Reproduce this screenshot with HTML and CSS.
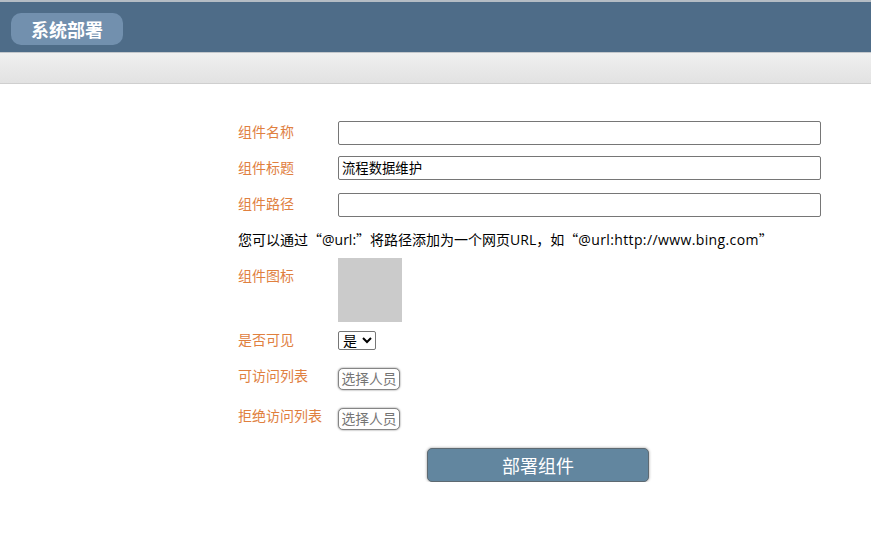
FILE: index.html
```html
<!DOCTYPE html>
<html lang="zh-CN">
<head>
<meta charset="utf-8">
<title>系统部署</title>
<link rel="stylesheet" href="styles.css">
</head>
<body>
<header class="topbar"><h1 class="title">系统部署</h1></header>
<div class="subbar"></div>
<form class="form">
  <div class="row row-name"><label class="label">组件名称</label><input class="text" type="text"></div>
  <div class="row row-title"><label class="label">组件标题</label><input class="text" type="text" value="流程数据维护"></div>
  <div class="row row-path"><label class="label">组件路径</label><input class="text" type="text"></div>
  <p class="hint">您可以通过<span class="open-quote">“</span>@url:<span class="close-quote">”</span>将路径添加为一个网页URL，如<span class="open-quote">“</span><span class="url">@url:http://www.bing.com</span><span class="close-quote">”</span></p>
  <div class="row row-icon"><label class="label">组件图标</label><div class="icon-box"></div></div>
  <div class="row row-visible"><label class="label">是否可见</label><select class="select"><option>是</option><option>否</option></select></div>
  <div class="row row-allow"><label class="label">可访问列表</label><button class="pick" type="button">选择人员</button></div>
  <div class="row row-deny"><label class="label">拒绝访问列表</label><button class="pick" type="button">选择人员</button></div>
  <div class="actions"><button class="submit" type="button">部署组件</button></div>
</form>
</body>
</html>
```
FILE: styles.css
```css
* { box-sizing: border-box; }
html, body { margin: 0; padding: 0; background: #fff; }
body {
  font-family: "Open Sans", "Noto Sans CJK SC", sans-serif;
  font-size: 14px;
  color: #000;
  overflow: hidden;
}
.topbar {
  height: 53px;
  background: #4e6c88;
  border-top: 2px solid #b4bcc4;
  border-bottom: 1px solid #c4c8cc;
  padding: 11px 0 0 11px;
}
.title {
  margin: 0;
  width: 112px;
  height: 32px;
  line-height: 32px;
  font-size: 18px;
  font-weight: 700;
  text-align: center;
  color: #fff;
  background: #7290ae;
  border-radius: 10px;
  font-family: "Noto Sans CJK SC", sans-serif;
}
.subbar {
  height: 31px;
  background: linear-gradient(#f0f0f0, #e2e2e2);
  border-bottom: 1px solid #cfcfcf;
}
.form { padding: 37px 50px 0 238px; }
.row { display: flex; align-items: flex-start; }
.label {
  flex: 0 0 100px;
  color: #e0803f;
  line-height: 22px;
  font-size: 14px;
  white-space: nowrap;
}
.text {
  flex: 1;
  height: 24px;
  padding: 0 3px;
  border: 1px solid #767676;
  border-radius: 2px;
  background: #fff;
  font: 13.333px "Open Sans", "Noto Sans CJK SC", sans-serif;
  line-height: 20px;
  color: #000;
  outline: none;
}
.row-title { margin-top: 11px; }
.row-title .text { padding-bottom: 2px; }
.row-title .label { margin-top: 1px; }
.row-path { margin-top: 13px; }
.hint { margin: 12px 0 0; height: 21px; line-height: 22px; white-space: nowrap; }
.open-quote, .close-quote {
  display: inline-block;
  width: 14px;
  line-height: 14px;
  font-family: "Noto Sans CJK SC", sans-serif;
}
.open-quote { text-align: right; }
.close-quote { text-align: left; }
.url { letter-spacing: .38px; }
.row-icon { margin-top: 8px; }
.row-icon .label { padding-top: 7px; }
.icon-box { width: 64px; height: 64px; background: #cbcbcb; }
.row-visible { margin-top: 9px; }
.row-visible .label { margin-top: -2px; }
.select {
  width: 38px;
  height: 19px;
  padding: 0;
  border: 1px solid #767676;
  border-radius: 2px;
  background: #fff;
  font: 14px "Liberation Sans", "Noto Sans CJK SC", sans-serif;
  color: #000;
}
.row-allow { margin-top: 17px; }
.row-deny { margin-top: 18px; }
.row-allow .label, .row-deny .label { margin-top: -3px; }
.pick {
  width: 62px;
  height: 22px;
  padding: 0 0 2px;
  border: 1px solid #858585;
  border-radius: 5px;
  background: #fff;
  color: #757575;
  font: 13.8px "Noto Sans CJK SC", sans-serif;
  line-height: 18px;
  box-shadow: 0 0 2px rgba(0,0,0,.55);
}
.actions { margin-top: 18px; padding-left: 189px; }
.submit {
  display: block;
  width: 222px;
  height: 34px;
  padding: 0;
  border: 1px solid #5e6a72;
  border-radius: 5px;
  background: #62869f;
  color: #fff;
  font: 18px "Noto Sans CJK SC", sans-serif;
  box-shadow: 0 0 3px rgba(0,0,0,.4);
}
```
